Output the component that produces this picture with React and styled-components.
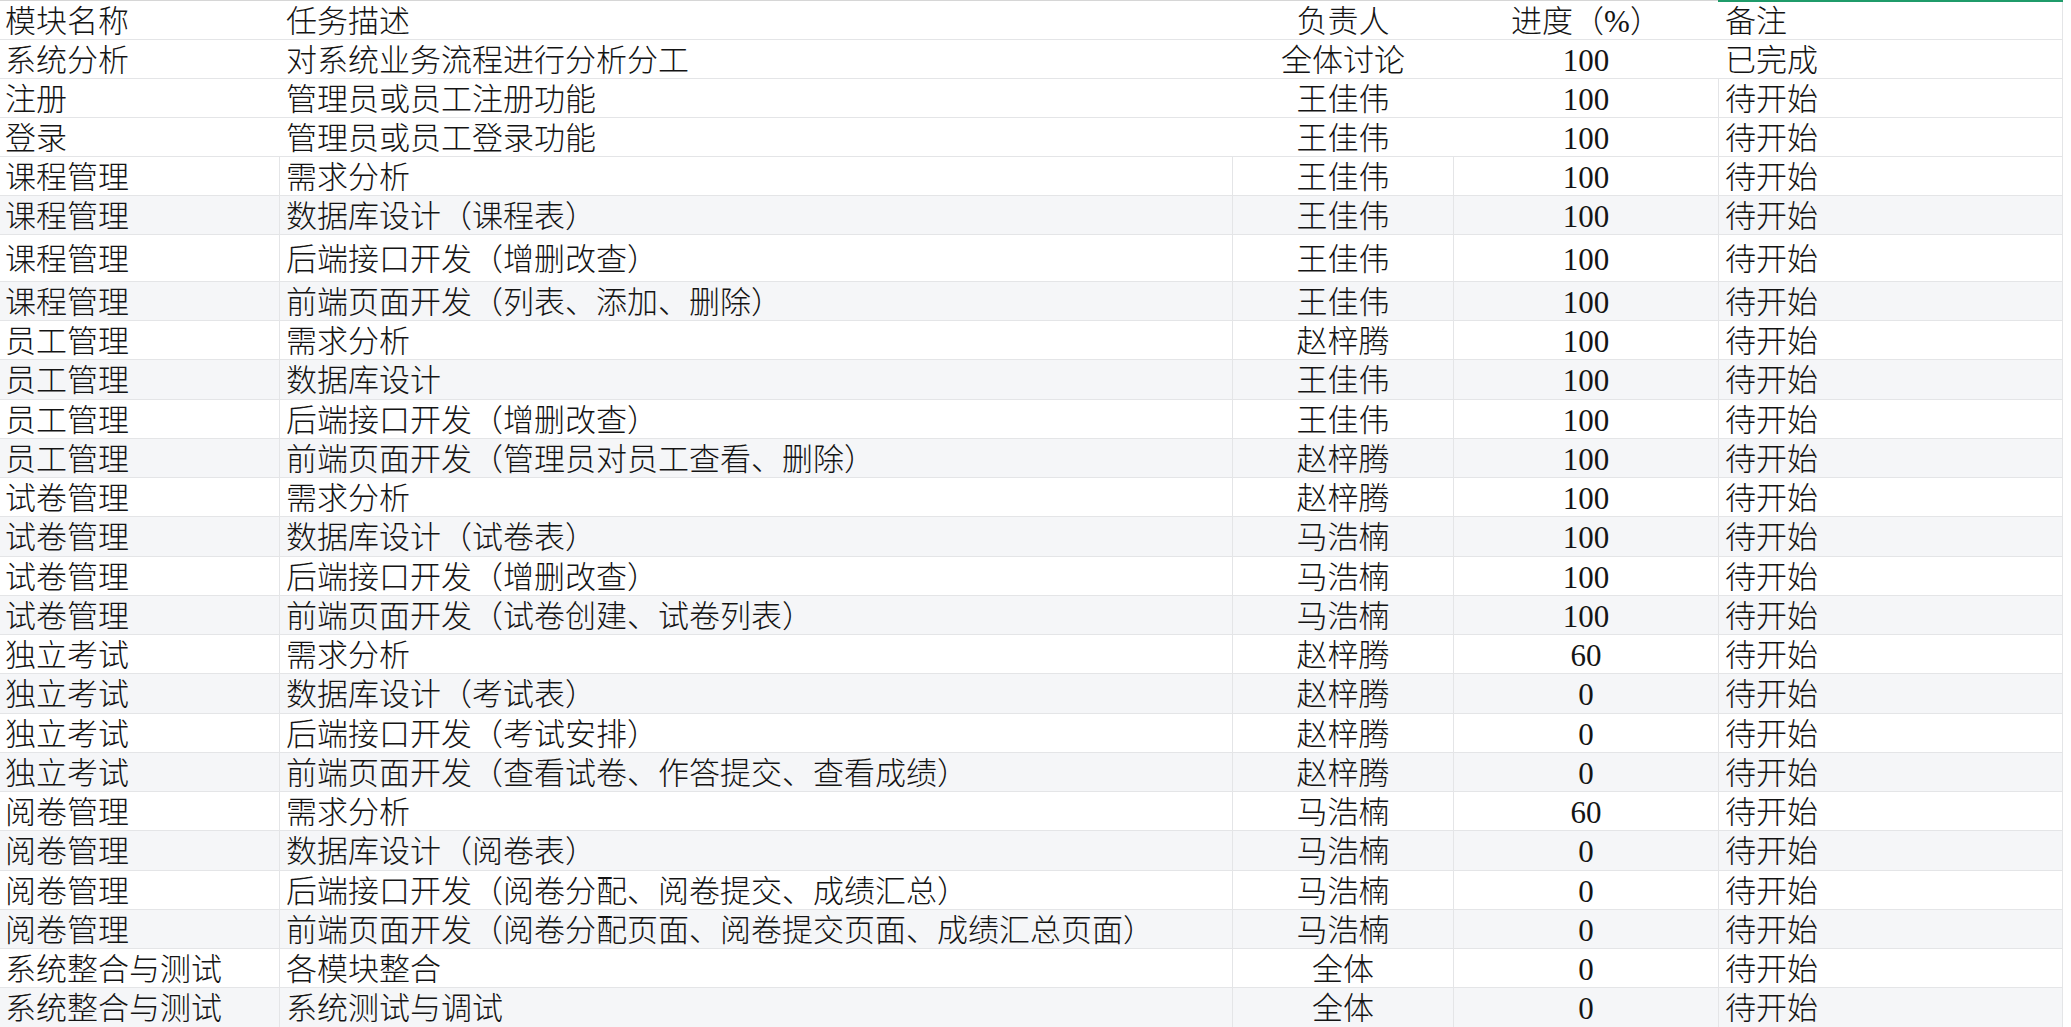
import React from "react";
import styled, { createGlobalStyle, css } from "styled-components";

const Global = createGlobalStyle`
  html, body { margin: 0; padding: 0; background: #ffffff; }
  body { font-family: "Liberation Serif", "Noto Sans CJK SC", serif; }
`;

const COLS = "279px 953px 221px 265px 345px";
const LINE = "#e4e5e7";

const Sheet = styled.div`
  width: 2063px;
  border-top: 1px solid #d6d6d6;
  position: relative;
`;

const Selection = styled.div`
  position: absolute;
  top: -1px;
  left: 1718px;
  width: 345px;
  height: 2px;
  background: #1f9b6a;
`;

const Row = styled.div`
  display: grid;
  grid-template-columns: ${COLS};
  height: ${(p) => p.$h}px;
  box-sizing: border-box;
  border-bottom: 1px solid ${LINE};
  background: ${(p) => (p.$striped ? "#f5f6f8" : "#ffffff")};
`;

const Cell = styled.div`
  display: flex;
  align-items: center;
  box-sizing: border-box;
  padding-left: ${(p) => (p.$first ? 5 : 6)}px;
  border-left: 1px solid ${(p) => (p.$line ? LINE : "transparent")};
  ${(p) => p.$first && css`border-left: none;`}
  ${(p) => p.$last && css`border-right: 1px solid ${LINE};`}
  justify-content: ${(p) => (p.$center ? "center" : "flex-start")};
  ${(p) => p.$center && css`padding-left: 0;`}
  font-family: "Liberation Serif", "Noto Sans CJK SC", serif;
  font-weight: 300;
  font-size: 31px;
  line-height: 1;
  color: #141414;
  white-space: nowrap;
  overflow: hidden;
`;

const Text = styled.span`
  display: block;
  transform: translateY(1px);
`;

const header = ["模块名称", "任务描述", "负责人", "进度（%）", "备注"];

const rows = [
  ["系统分析", "对系统业务流程进行分析分工", "全体讨论", "100", "已完成"],
  ["注册", "管理员或员工注册功能", "王佳伟", "100", "待开始"],
  ["登录", "管理员或员工登录功能", "王佳伟", "100", "待开始"],
  ["课程管理", "需求分析", "王佳伟", "100", "待开始"],
  ["课程管理", "数据库设计（课程表）", "王佳伟", "100", "待开始"],
  ["课程管理", "后端接口开发（增删改查）", "王佳伟", "100", "待开始"],
  ["课程管理", "前端页面开发（列表、添加、删除）", "王佳伟", "100", "待开始"],
  ["员工管理", "需求分析", "赵梓腾", "100", "待开始"],
  ["员工管理", "数据库设计", "王佳伟", "100", "待开始"],
  ["员工管理", "后端接口开发（增删改查）", "王佳伟", "100", "待开始"],
  ["员工管理", "前端页面开发（管理员对员工查看、删除）", "赵梓腾", "100", "待开始"],
  ["试卷管理", "需求分析", "赵梓腾", "100", "待开始"],
  ["试卷管理", "数据库设计（试卷表）", "马浩楠", "100", "待开始"],
  ["试卷管理", "后端接口开发（增删改查）", "马浩楠", "100", "待开始"],
  ["试卷管理", "前端页面开发（试卷创建、试卷列表）", "马浩楠", "100", "待开始"],
  ["独立考试", "需求分析", "赵梓腾", "60", "待开始"],
  ["独立考试", "数据库设计（考试表）", "赵梓腾", "0", "待开始"],
  ["独立考试", "后端接口开发（考试安排）", "赵梓腾", "0", "待开始"],
  ["独立考试", "前端页面开发（查看试卷、作答提交、查看成绩）", "赵梓腾", "0", "待开始"],
  ["阅卷管理", "需求分析", "马浩楠", "60", "待开始"],
  ["阅卷管理", "数据库设计（阅卷表）", "马浩楠", "0", "待开始"],
  ["阅卷管理", "后端接口开发（阅卷分配、阅卷提交、成绩汇总）", "马浩楠", "0", "待开始"],
  ["阅卷管理", "前端页面开发（阅卷分配页面、阅卷提交页面、成绩汇总页面）", "马浩楠", "0", "待开始"],
  ["系统整合与测试", "各模块整合", "全体", "0", "待开始"],
  ["系统整合与测试", "系统测试与调试", "全体", "0", "待开始"],
];

function SheetRow({ cells, height, striped, lines }) {
  return (
    <Row $h={height} $striped={striped}>
      {cells.map((c, i) => (
        <Cell
          key={i}
          $first={i === 0}
          $last={i === 4}
          $center={i === 2 || i === 3}
          $line={lines === "all" || (lines === "notes" && i === 4)}
        >
          <Text>{c}</Text>
        </Cell>
      ))}
    </Row>
  );
}

export default function App() {
  return (
    <>
      <Global />
      <Sheet>
        <Selection />
        <SheetRow cells={header} height={39} striped={false} lines="none" />
        {rows.map((r, i) => (
          <SheetRow
            key={i}
            cells={r}
            height={i === 5 ? 47 : i >= 7 && i % 4 === 0 ? 40 : 39}
            striped={i >= 4 && i % 2 === 0}
            lines={i === 0 ? "none" : i < 3 ? "notes" : "all"}
          />
        ))}
      </Sheet>
    </>
  );
}
